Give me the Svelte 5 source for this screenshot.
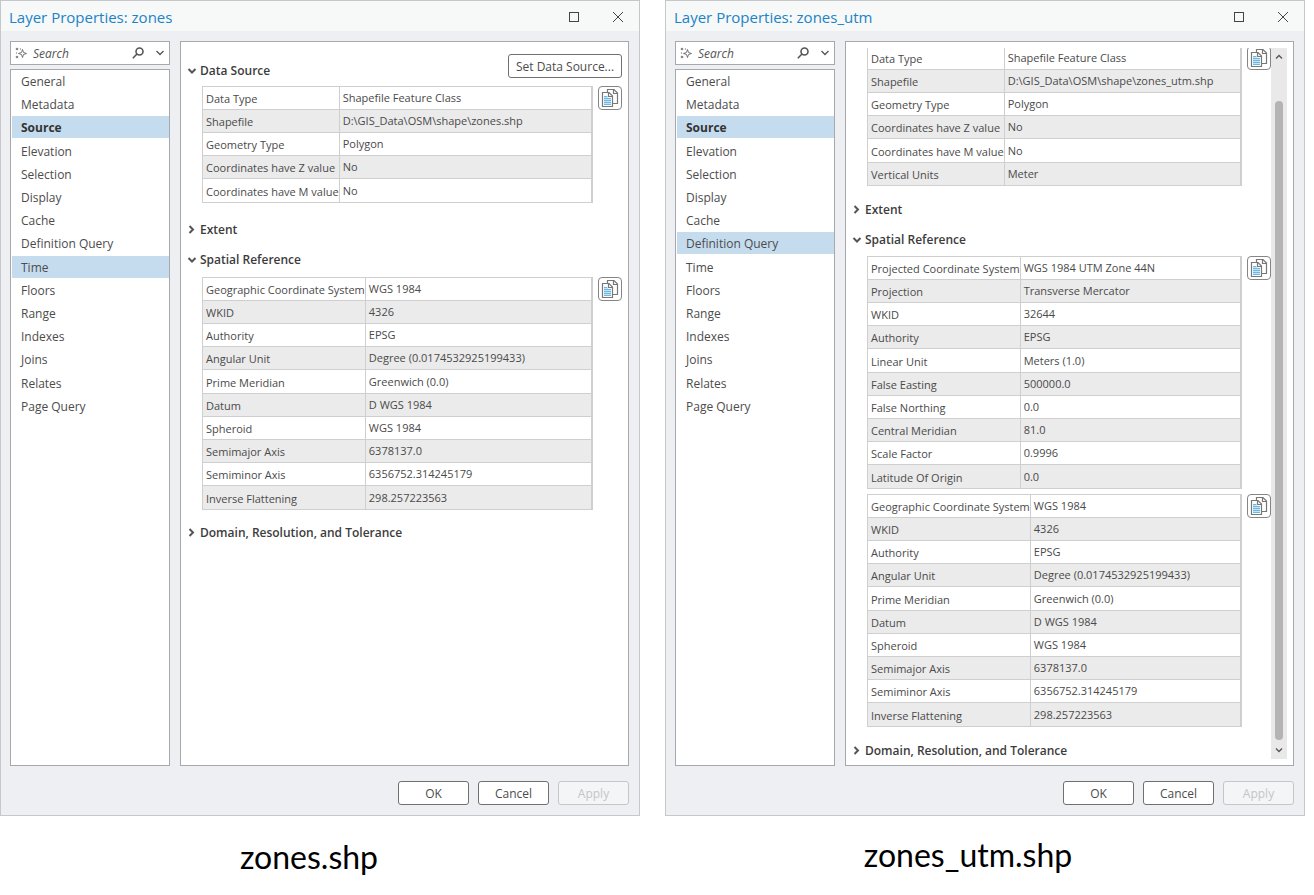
<script>
  const pages = [
    'General', 'Metadata', 'Source', 'Elevation', 'Selection', 'Display', 'Cache',
    'Definition Query', 'Time', 'Floors', 'Range', 'Indexes', 'Joins', 'Relates', 'Page Query'
  ];

  const geographic = [
    ['Geographic Coordinate System', 'WGS 1984'],
    ['WKID', '4326'],
    ['Authority', 'EPSG'],
    ['Angular Unit', 'Degree (0.0174532925199433)'],
    ['Prime Meridian', 'Greenwich (0.0)'],
    ['Datum', 'D WGS 1984'],
    ['Spheroid', 'WGS 1984'],
    ['Semimajor Axis', '6378137.0'],
    ['Semiminor Axis', '6356752.314245179'],
    ['Inverse Flattening', '298.257223563']
  ];

  const projected = [
    ['Projected Coordinate System', 'WGS 1984 UTM Zone 44N'],
    ['Projection', 'Transverse Mercator'],
    ['WKID', '32644'],
    ['Authority', 'EPSG'],
    ['Linear Unit', 'Meters (1.0)'],
    ['False Easting', '500000.0'],
    ['False Northing', '0.0'],
    ['Central Meridian', '81.0'],
    ['Scale Factor', '0.9996'],
    ['Latitude Of Origin', '0.0']
  ];

  const source = (path) => [
    ['Data Type', 'Shapefile Feature Class'],
    ['Shapefile', path],
    ['Geometry Type', 'Polygon'],
    ['Coordinates have Z value', 'No'],
    ['Coordinates have M value', 'No']
  ];

  const dialogs = [
    {
      id: 'zones',
      hovered: 'Time',
      scrolled: false,
      source: source('D:\\GIS_Data\\OSM\\shape\\zones.shp'),
      reference: [geographic]
    },
    {
      id: 'zones_utm',
      hovered: 'Definition Query',
      scrolled: true,
      source: [...source('D:\\GIS_Data\\OSM\\shape\\zones_utm.shp'), ['Vertical Units', 'Meter']],
      reference: [projected, geographic]
    }
  ];
</script>

{#snippet chevron(open)}
  <svg class="chevron" viewBox="0 0 10 10" aria-hidden="true">
    {#if open}
      <path d="M1.500 3 5 6.500 8.500 3" />
    {:else}
      <path d="M2.500 1 6 4.500 2.500 8" />
    {/if}
  </svg>
{/snippet}

{#snippet heading(text, open)}
  <h2><button class="toggle" type="button" aria-expanded={open}>{@render chevron(open)}{text}</button></h2>
{/snippet}

{#snippet grid(rows)}
  <div class="block">
    <table>
      <tbody>
        {#each rows as [name, value]}
          <tr><th scope="row">{name}</th><td>{value}</td></tr>
        {/each}
      </tbody>
    </table>
    <button class="copy" type="button" aria-label="Copy">
      <svg viewBox="0 0 18 20" aria-hidden="true">
        <path class="page" d="M6.500 4V1.500H13L16.500 5V15.500H11.500" />
        <path class="page" d="M12.500 1.500V5.500H16.500" />
        <path class="front" d="M1.500 4.500H8L11.500 8V18.500H1.500Z" />
        <path class="page" d="M7.500 4.500V8.500H11.500" />
        <path class="tint" d="M3 8H7V10H10V17H3Z" />
        <path class="lines" d="M3 8.500H6M3 10.500H10M3 12.500H10M3 14.500H10M3 16.500H10" />
      </svg>
    </button>
  </div>
{/snippet}

<main>
  {#each dialogs as d}
    <figure>
      <section class="dialog" aria-labelledby="title-{d.id}">
        <header>
          <h1 id="title-{d.id}">Layer Properties: {d.id}</h1>
          <button type="button" aria-label="Maximize">
            <svg viewBox="0 0 12 12"><rect x="1.500" y="1.500" width="9" height="9" /></svg>
          </button>
          <button type="button" aria-label="Close">
            <svg viewBox="0 0 12 12"><path d="M1 1 11 11M11 1 1 11" /></svg>
          </button>
        </header>

        <div class="body">
          <aside>
            <div class="search">
              <svg class="spark" viewBox="0 0 12 12" aria-hidden="true">
                <path d="M7.500 2.500 8.500 5.500 11.500 6.500 8.500 7.500 7.500 10.500 6.500 7.500 3.500 6.500 6.500 5.500Z" />
                <circle cx="2" cy="2" r="1.300" /><circle cx="5.500" cy="2" r=".7" />
                <circle cx="1.500" cy="6" r=".7" /><circle cx="2" cy="10" r="1.300" />
              </svg>
              <input type="text" placeholder="Search" aria-label="Search" />
              <button type="button" aria-label="Find">
                <svg class="lens" viewBox="0 0 12 12"><circle cx="7.500" cy="4.500" r="3.500" /><path d="M5 7 .8 11.200" /></svg>
              </button>
              <button type="button" aria-label="Search options">
                <svg class="drop" viewBox="0 0 10 10"><path d="M1.500 3 5 6.500 8.500 3" /></svg>
              </button>
            </div>
            <nav>
              <ul>
                {#each pages as page}
                  <li>
                    <button
                      type="button"
                      class:current={page === 'Source'}
                      class:hovered={page === d.hovered}>{page}</button>
                  </li>
                {/each}
              </ul>
            </nav>
          </aside>

          <div class="panel" class:scrolled={d.scrolled}>
            <div class="content">
              {#if !d.scrolled}
                <div class="top">
                  {@render heading('Data Source', true)}
                  <button class="btn set" type="button">Set Data Source...</button>
                </div>
              {/if}
              <div class="source">{@render grid(d.source)}</div>
              {@render heading('Extent', false)}
              {@render heading('Spatial Reference', true)}
              <div class="reference">
                {#each d.reference as rows}
                  {@render grid(rows)}
                {/each}
              </div>
              {@render heading('Domain, Resolution, and Tolerance', false)}
            </div>
            {#if d.scrolled}
              <div class="scrollbar">
                <button type="button" aria-label="Scroll up">
                  <svg viewBox="0 0 10 10"><path d="M2 6.500 5 3.500 8 6.500" /></svg>
                </button>
                <div class="track"><div class="thumb"></div></div>
                <button type="button" aria-label="Scroll down">
                  <svg viewBox="0 0 10 10"><path d="M2 3.500 5 6.500 8 3.500" /></svg>
                </button>
              </div>
            {/if}
          </div>
        </div>

        <footer>
          <button class="btn" type="button">OK</button>
          <button class="btn" type="button">Cancel</button>
          <button class="btn" type="button" disabled>Apply</button>
        </footer>
      </section>
      <figcaption>{d.id}.shp</figcaption>
    </figure>
  {/each}
</main>

<style>
  :global(body) {
    background: #fff;
  }
  main {
    display: grid;
    grid-template-columns: 1fr 1fr;
    gap: 25px;
    padding-right: 9px;
    min-height: 100vh;
    box-sizing: border-box;
    font-family: 'Open Sans', 'Noto Sans', sans-serif;
    font-size: 12px;
    color: #4c4c4c;
  }
  figure {
    display: flex;
    flex-direction: column;
    min-width: 0;
    margin: 0;
  }
  button,
  input {
    font: inherit;
    color: inherit;
    padding: 0;
    border: 0;
    background: none;
  }
  svg {
    display: block;
    fill: none;
    stroke: #555;
  }
  .dialog {
    flex: 1;
    display: flex;
    flex-direction: column;
    border: 1px solid #c6c7ca;
    background: #eeeff2;
  }
  header {
    display: flex;
    align-items: center;
    height: 30px;
    padding: 2px 7px 0 8px;
    margin-bottom: 10px;
    box-sizing: border-box;
    background: #f7f8f8;
  }
  header button {
    display: grid;
    place-items: center;
    width: 28px;
    height: 28px;
    margin-left: 16px;
  }
  header svg {
    width: 12px;
    height: 12px;
    stroke: #444;
  }
  h1 {
    flex: 1;
    margin: 0;
    font-size: 15px;
    line-height: 24px;
    font-weight: 400;
    color: #1a84c6;
  }
  h2 {
    margin: 0;
    font-size: 12px;
    font-weight: 600;
    line-height: 30px;
  }
  .body {
    flex: 1;
    display: flex;
    gap: 10px;
    padding: 0 10px 0 9px;
  }
  aside {
    display: flex;
    flex-direction: column;
    gap: 4px;
    width: 160px;
  }
  .search {
    display: flex;
    align-items: center;
    height: 24px;
    padding: 0 4px;
    box-sizing: border-box;
    border: 1px solid #a6a8ab;
    background: #fff;
  }
  .search input {
    flex: 1;
    min-width: 0;
    margin-left: 6px;
    outline: 0;
    font-style: italic;
  }
  .search input::placeholder {
    color: #555;
    opacity: 1;
  }
  .spark {
    width: 12px;
    height: 12px;
    stroke-width: 0.8;
  }
  .spark circle {
    fill: #888;
    stroke: none;
  }
  .lens {
    width: 12px;
    height: 12px;
    margin-right: 11px;
    stroke-width: 1.600;
  }
  .drop {
    width: 10px;
    height: 10px;
    stroke-width: 1.300;
  }
  nav {
    flex: 1;
    border: 1px solid #a6a8ab;
    background: #fff;
  }
  ul {
    margin: 0;
    padding: 0;
    list-style: none;
  }
  li {
    padding: 0 0 1px 1px;
  }
  li:nth-child(5n + 3) {
    padding-bottom: 2px;
  }
  li button {
    display: block;
    width: 100%;
    height: 22px;
    padding-left: 9px;
    text-align: left;
  }
  .current,
  .hovered {
    background: #c5dcef;
  }
  .current {
    font-weight: 700;
    color: #333;
  }
  .panel {
    flex: 1;
    display: flex;
    min-width: 0;
    padding: 12px 6px 6px;
    border: 1px solid #a6a8ab;
    background: #fff;
  }
  .scrolled {
    padding-top: 6px;
  }
  .content {
    flex: 1;
    min-width: 0;
  }
  .top {
    display: flex;
    justify-content: space-between;
    align-items: end;
    height: 32px;
    padding-bottom: 0;
  }
  .toggle {
    display: flex;
    align-items: center;
    gap: 3px;
    color: #3c3c3c;
  }
  .chevron {
    width: 10px;
    height: 10px;
    stroke-width: 2;
  }
  .source {
    margin-bottom: 12px;
  }
  .reference {
    display: grid;
    gap: 5px;
    margin: 2px 0 8px;
  }
  .scrolled .content {
    overflow: hidden;
  }
  .scrolled .source {
    margin: -2px 0 9px;
  }
  .scrolled .reference {
    margin: 1px 0 15px;
  }
  .scrolled .reference + h2 {
    line-height: 17px;
  }
  .block {
    display: flex;
    align-items: start;
    gap: 5px;
    padding-left: 15px;
  }
  table {
    flex: 1;
    min-width: 0;
    border-collapse: separate;
    border-spacing: 0;
    border: 1px solid #cfcfcf;
    border-width: 1px 1px 0 1px;
    font-size: 11px;
    line-height: 16px;
    color: #4a4a4a;
  }
  tr {
    height: 23px;
  }
  tr:nth-child(5n) {
    height: 24px;
  }
  tr:nth-child(even) {
    background: #ebebeb;
  }
  th,
  td {
    padding: 0;
    border-bottom: 1px solid #cfcfcf;
    border-right: 1px solid #cfcfcf;
    text-align: left;
    font-weight: 400;
    white-space: nowrap;
  }
  th {
    width: 1px;
    padding: 2px 0 0 3px;
  }
  td {
    padding-left: 3px;
  }
  .copy {
    display: grid;
    place-items: center;
    width: 24px;
    height: 24px;
    border: 1px solid #858585;
    border-radius: 4px;
    background: #fff;
  }
  .copy svg {
    width: 18px;
    height: 20px;
    stroke: #777;
    stroke-width: 1.200;
  }
  .copy .front {
    fill: #fff;
  }
  .copy .tint {
    fill: #c4e3f5;
    stroke: none;
  }
  .copy .lines {
    stroke: #6db8e2;
    stroke-width: 1;
  }
  .scrollbar {
    display: flex;
    flex-direction: column;
    width: 16px;
    background: #e9e9e9;
  }
  .scrollbar button {
    display: grid;
    place-items: center;
    height: 18px;
  }
  .scrollbar svg {
    width: 10px;
    height: 10px;
    stroke-width: 1.300;
  }
  .track {
    flex: 1;
    display: flex;
    padding: 35px 4px 1px;
  }
  .thumb {
    flex: 1;
    border-radius: 4px;
    background: #b4b4b4;
  }
  footer {
    display: flex;
    justify-content: flex-end;
    gap: 9px;
    padding: 15px 10px 10px;
  }
  .btn {
    width: 71px;
    height: 24px;
    border: 1px solid #707070;
    border-radius: 3px;
    background: #fff;
  }
  .btn:disabled {
    border-color: #c4c6c8;
    background: #f4f5f7;
    color: #c3c5c7;
  }
  .top .set {
    align-self: start;
    width: 114px;
  }
  figcaption {
    height: 79px;
    padding: 22px 22px 0 0;
    box-sizing: border-box;
    text-align: center;
    font-family: Lato, sans-serif;
    font-size: 32px;
    line-height: 38px;
    color: #000;
  }
  figure + figure figcaption {
    padding: 20px 34px 0 0;
  }
</style>
